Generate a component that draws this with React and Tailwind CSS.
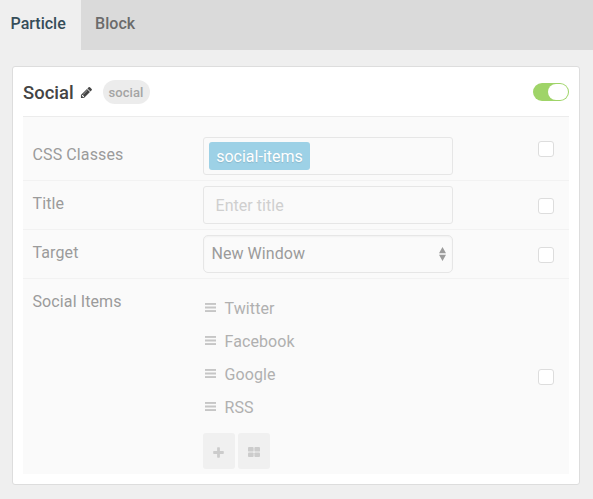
import React from "react";

function Row({ label, className, checkClass, children }) {
  return (
    <div className={"flex pl-[9.5px] " + className}>
      <div className="w-[170.5px] shrink-0 pt-[6px] text-[16px] leading-6 tracking-[0.11px] text-[#9b9b9b]">{label}</div>
      <div className="w-[250px] shrink-0">{children}</div>
      <div className="flex flex-1 justify-end pr-[15px]">
        <div className={"h-4 w-4 rounded-[3px] border border-[#dddddd] bg-white " + checkClass} />
      </div>
    </div>
  );
}

function Handle() {
  return (
    <svg className="mb-[2px] h-[9px] w-[11px]" viewBox="0 0 11 9" fill="#c6c6c6">
      <rect y="0" width="11" height="1.9" />
      <rect y="3.5" width="11" height="2" />
      <rect y="7.1" width="11" height="1.9" />
    </svg>
  );
}

function Pencil() {
  return (
    <svg className="ml-[6px] h-[13px] w-[13px]" viewBox="0 0 1792 1792" fill="#444444">
      <path d="M491 1536l91-91-235-235-91 91v107h128v128h107zm523-928q0-22-22-22-10 0-17 7l-542 542q-7 7-7 17 0 22 22 22 10 0 17-7l542-542q7-7 7-17zm-54-192l416 416-832 832h-416v-416zm683 96q0 53-37 90l-166 166-416-416 166-165q36-38 90-38 53 0 91 38l235 234q37 39 37 91z" />
    </svg>
  );
}

const items = ["Twitter", "Facebook", "Google", "RSS"];

export default function App() {
  return (
    <div className="h-[499px] w-[593px] overflow-hidden bg-[#efefef] font-['Roboto',sans-serif] text-[16px]">
      <div className="flex h-[50px] bg-[#dadada] font-medium leading-[48px]">
        <div className="w-[81px] bg-[#efefef] pl-[10.5px] text-[#354d59]">Particle</div>
        <div className="pl-[14px] tracking-[0.05px] text-[#6b6b6b]">Block</div>
      </div>
      <div className="mt-4 mr-[13px] ml-3 h-[419px] rounded-[3px] border border-[#dddddd] bg-white px-[10px]">
        <div className="flex h-[49px] items-center pt-px">
          <h1 className="mt-px w-[51px] text-[18.4px] font-medium tracking-[0.05px] text-[#444444]">Social</h1>
          <Pencil />
          <span className="ml-[10px] flex h-6 w-[47px] items-center justify-center rounded-full bg-[#ececec] pt-px pr-px text-[13px] font-medium tracking-[0.05px] text-[#a4a4a4]">social</span>
          <div className="mb-px ml-auto flex h-[18px] w-9 justify-end rounded-full bg-[#9fd468] p-px">
            <div className="h-4 w-5 rounded-full bg-white" />
          </div>
        </div>
        <div className="h-[358px] border-t border-[#ececec] bg-[#fafafa]">
          <Row label="CSS Classes" className="h-16 border-b border-[#f2f2f2] pt-5" checkClass="mt-1">
            <div className="h-[38px] rounded-[3px] border border-[#e6e6e6] p-[4px] pl-[5px]">
              <span className="inline-block h-7 w-[101px] rounded-[3px] bg-[#9dd1e6] text-center leading-[29px] text-white [text-shadow:0_1px_1px_rgba(0,0,0,0.12)]">social-items</span>
            </div>
          </Row>
          <Row label="Title" className="h-[49px] border-b border-[#f2f2f2] pt-[5px]" checkClass="mt-3">
            <div className="h-[38px] rounded-[3px] border border-[#e6e6e6] pl-[11.5px] leading-[37px] tracking-[0.05px] text-[#cfcfcf]">Enter title</div>
          </Row>
          <Row label="Target" className="h-[49px] border-b border-[#f2f2f2] pt-[5px]" checkClass="mt-3">
            <div className="flex h-[38px] items-center justify-between rounded-[5px] border border-[#e6e6e6] pr-[6px] pl-[7.5px] text-[#9b9b9b] shadow-[inset_0_1px_2px_rgba(0,0,0,0.04)]">
              <span className="leading-[34px] tracking-[0.05px]">New Window</span>
              <svg className="h-[14px] w-[7px]" viewBox="0 0 7 14" fill="#9b9b9b">
                <path d="M3.5 0L7 6.2H0ZM3.5 14L0 7.8H7Z" />
              </svg>
            </div>
          </Row>
          <Row label="Social Items" className="h-[195px] pt-[5px]" checkClass="mt-[85px]">
            <div className="pt-[8px]">
              {items.map((t) => (
                <div key={t} className="flex h-[33px] items-center gap-[8.5px] pl-[2px] tracking-[0.1px] text-[#b0b0b0]">
                  <Handle />
                  <span>{t}</span>
                </div>
              ))}
            </div>
            <div className="mt-[9px] flex gap-[3px]">
              <div className="flex h-9 w-8 items-center justify-center rounded-[3px] bg-[#f0f0f0]">
                <svg className="mt-[2px] mr-px h-[11px] w-[11px]" viewBox="0 0 11 11" fill="#cccccc">
                  <rect x="0.2" y="4.1" width="10.6" height="2.8" rx="0.7" />
                  <rect x="4.1" y="0.2" width="2.8" height="10.6" rx="0.7" />
                </svg>
              </div>
              <div className="flex h-9 w-8 items-center justify-center rounded-[3px] bg-[#f0f0f0]">
                <svg className="mt-[2px] h-[10px] w-[12px]" viewBox="0 0 12 10" fill="#cccccc">
                  <rect x="0" y="0" width="5.6" height="4.6" rx="0.9" />
                  <rect x="6.4" y="0" width="5.6" height="4.6" rx="0.9" />
                  <rect x="0" y="5.4" width="5.6" height="4.6" rx="0.9" />
                  <rect x="6.4" y="5.4" width="5.6" height="4.6" rx="0.9" />
                </svg>
              </div>
            </div>
          </Row>
        </div>
      </div>
    </div>
  );
}
